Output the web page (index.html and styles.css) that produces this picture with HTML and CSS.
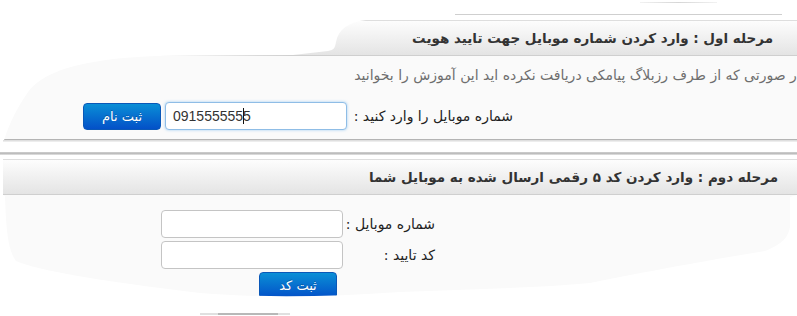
FILE: index.html
```html
<!DOCTYPE html>
<html lang="fa">
<head>
<meta charset="utf-8">
<title>ثبت نام</title>
<link rel="stylesheet" href="styles.css">
</head>
<body>
<div class="page">
  <div class="scrap-top">
    <div class="scrap-line scrap-line-a"></div>
    <div class="scrap-line scrap-line-b"></div>
  </div>

  <section class="panel panel-one">
    <h2 class="panel-head head-one">مرحله اول : وارد کردن شماره موبایل جهت تایید هویت</h2>
    <div class="panel-body body-one">
      <p class="info">در صورتی که از طرف رزبلاگ پیامکی دریافت نکرده اید این آموزش را بخوانید</p>
      <div class="row-one">
        <label class="lbl lbl-one">شماره موبایل را وارد کنید :</label>
        <div class="field field-focus" dir="ltr">091555555<span class="caret"></span>5</div>
        <button class="btn btn-one">ثبت نام</button>
      </div>
    </div>
  </section>
  <div class="panel-shadow"></div>
  <div class="sep"></div>

  <section class="panel panel-two">
    <h2 class="panel-head head-two">مرحله دوم : وارد کردن کد ۵ رقمی ارسال شده به موبایل شما</h2>
    <div class="panel-body body-two">
      <div class="form-grid">
        <label class="lbl">شماره موبایل :</label>
        <div class="field"></div>
        <label class="lbl">کد تایید :</label>
        <div class="field"></div>
        <span></span>
        <div class="btn-cell"><button class="btn btn-two">ثبت کد</button></div>
      </div>
    </div>
  </section>
  <div class="scrap-bottom"></div>
</div>
</body>
</html>
```

FILE: styles.css
```css
html, body {
  margin: 0;
  padding: 0;
  background: #ffffff;
}
body {
  width: 797px;
  height: 316px;
  overflow: hidden;
  font-family: "DejaVu Sans", sans-serif;
  color: #333;
}
.page {
  width: 797px;
}
.scrap-top {
  height: 20px;
  box-sizing: border-box;
  padding-top: 2px;
}
.scrap-line {
  height: 1px;
}
.scrap-line-a {
  margin-left: 640px;
  width: 77px;
  background: linear-gradient(to right, #f2f2f2, #d6d6d6, #f2f2f2);
}
.scrap-line-b {
  margin-top: 11px;
  margin-left: 455px;
  width: 327px;
  background: #cfcfcf;
}
.panel {
  direction: rtl;
}
.panel-one {
  clip-path: path('M 797 0 L 366 0 C 348 2, 338 10, 336 22 C 335 28, 334 30, 328 31 L 293 35 L 157 36 C 95 38, 45 48, 28 72 C 14 92, 6 112, 3 124 L 797 124 Z');
}
.panel-head {
  margin: 0;
  height: 34px;
  border-top: 1px solid #dedede;
  border-bottom: 1px solid #cfcfcf;
  background: linear-gradient(to bottom, #fdfdfd, #e4e4e4);
  font-size: 13.5px;
  font-weight: bold;
  line-height: 35px;
  color: #333;
  white-space: nowrap;
  overflow: hidden;
}
.head-one {
  padding-right: 24px;
}
.head-two {
  padding-right: 19px;
}
.panel-body {
  background: #fafafa;
}
.body-one {
  height: 84px;
  box-sizing: border-box;
  padding-top: 9px;
  border-bottom: 1px solid #b4b4b4;
  overflow: hidden;
}
.info {
  margin: 0 -6px 0 0;
  height: 20px;
  line-height: 20px;
  font-size: 14px;
  color: #6e6e6e;
  white-space: nowrap;
}
.row-one {
  display: flex;
  align-items: center;
  margin-top: 17px;
  padding-right: 284px;
}
.lbl {
  font-size: 14px;
  color: #222;
  white-space: nowrap;
}
.lbl-one {
  width: 163px;
  flex: none;
}
.field {
  width: 182px;
  height: 28px;
  box-sizing: border-box;
  flex: none;
  border: 1px solid #c4c4c4;
  border-radius: 4px;
  background: #fff;
  font-family: "Liberation Sans", Arial, sans-serif;
  font-size: 14px;
  line-height: 26px;
  padding-left: 7px;
  color: #333;
  text-align: left;
}
.row-one .field {
  margin-right: 3px;
}
.field-focus {
  border-color: #8fbde6;
  box-shadow: 0 0 3px rgba(82, 168, 236, 0.55);
}
.caret {
  display: inline-block;
  width: 1px;
  height: 16px;
  background: #111;
  vertical-align: -3px;
  margin-right: -1px;
}
.btn {
  width: 78px;
  height: 27px;
  box-sizing: border-box;
  border: 1px solid #0a58b8;
  border-radius: 4px;
  background: linear-gradient(to bottom, #0a8fd6, #0350c8);
  color: #fff;
  font-family: "DejaVu Sans", sans-serif;
  font-size: 13px;
  padding: 0;
  text-shadow: 0 -1px 0 rgba(0, 0, 0, 0.25);
  flex: none;
}
.btn-one {
  margin-right: 4px;
}
.panel-shadow {
  margin-left: 3px;
  height: 2px;
  background: linear-gradient(to bottom, #d8d8d8, #f4f4f4);
}
.sep {
  margin-top: 10px;
  height: 3px;
  background: linear-gradient(to bottom, #cfcfcf, #bdbdbd, #e6e6e6);
}
.panel-two {
  margin-top: 4px;
  clip-path: path('M 797 0 L 3 0 L 3 36 L 5 37 C 6 70, 8 92, 16 102 C 40 112, 100 122, 200 134 C 260 139, 330 138, 400 133 C 470 130, 540 129, 590 124 C 650 112, 720 99, 765 92 C 783 85, 788 78, 790 68 L 790 38 L 797 36 Z');
}
.body-two {
  height: 110px;
  box-sizing: border-box;
  padding-top: 15px;
}
.form-grid {
  display: grid;
  grid-template-columns: 89px 182px;
  column-gap: 3px;
  row-gap: 3px;
  padding-right: 362px;
  align-items: center;
}
.btn-cell {
  padding-right: 6px;
}
.scrap-bottom {
  margin-top: 8px;
  margin-left: 200px;
  width: 90px;
  height: 2px;
  background: linear-gradient(to right, #e0e0e0 0, #e0e0e0 18px, #b8b8b8 18px, #b8b8b8 78px, #e0e0e0 78px);
}
```
